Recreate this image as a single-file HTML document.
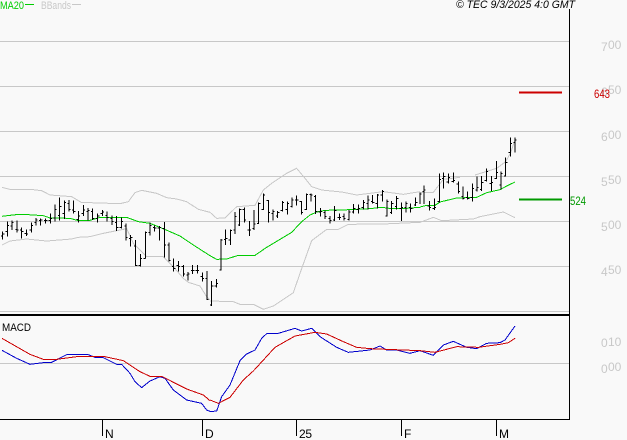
<!DOCTYPE html>
<html><head><meta charset="utf-8"><style>
html,body{margin:0;padding:0;background:#f9f9f9;width:627px;height:440px;overflow:hidden}
svg{display:block;position:absolute;left:0;top:0}
text{font-family:"Liberation Sans",sans-serif}
polyline{shape-rendering:crispEdges}
</style></head><body>
<svg width="627" height="440" viewBox="0 0 627 440" xmlns="http://www.w3.org/2000/svg">
<rect width="627" height="440" fill="#f9f9f9"/>
<g stroke="#c8c8c8" stroke-width="1" shape-rendering="crispEdges">
<path d="M0 41.5H569M0 86.5H569M0 131.5H569M0 176.5H569M0 221.5H569M0 266.5H569M0 311.5H569M0 363.5H569"/>
</g>
<path d="M0 315H570" stroke="#000" stroke-width="2" shape-rendering="crispEdges"/>
<path d="M569.5 9V419.5H0M102.5 419V436M202.5 419V436M296.5 419V436M401.5 419V436M496.5 419V436" stroke="#000" stroke-width="1" fill="none" shape-rendering="crispEdges"/>

<!-- left segment -->
<g transform="translate(0 150) scale(.33333)" fill="none" stroke-width="3">
<polyline stroke="#c8c8c8" points="6,112 30,118 100,119 125,122 150,135 215,140 245,158 270,158 360,161 385,155 405,128 425,121 470,130 500,143 530,147 560,155 595,178 630,187"/>
<polyline stroke="#c8c8c8" points="6,285 30,273 80,267 140,273 215,267 235,262 270,260 310,250 380,236 400,280 440,320 490,320 520,350 550,385 565,397 600,408 620,440 630,450"/>
<polyline stroke="#00cc00" points="6,199 30,196 57,193 85,194 130,197 150,204 210,205 235,212 270,211 300,202 380,202 415,215 450,220 480,232 540,258 580,285 630,317"/>
<path stroke="#000" shape-rendering="crispEdges" d="M8 245V268M3 258h5M8 252h5M22 214V260M17 245h5M22 226h5M36 211V240M31 228h5M36 218h5M51 212V248M46 238h5M51 240h5M65 232V266M60 240h5M65 244h5M79 238V258M74 250h5M79 252h5M94 217V248M89 240h5M94 226h5M108 204V226M103 218h5M108 210h5M122 205V226M117 212h5M122 210h5M137 205V220M132 212h5M137 212h5M151 190V220M146 212h5M151 206h5M165 163V215M160 204h5M165 178h5M179 142V212M174 196h5M179 170h5M193 152V207M188 190h5M193 158h5M207 150V185M202 160h5M207 178h5M221 152V190M216 180h5M221 184h5M235 183V218M230 208h5M235 198h5M250 165V198M245 190h5M250 180h5M264 174V212M259 185h5M264 182h5M278 176V210M273 184h5M278 205h5M293 190V217M288 205h5M293 198h5M307 180V198M302 190h5M307 186h5M321 184V215M316 196h5M321 202h5M336 197V225M331 206h5M336 215h5M350 198V243M345 218h5M350 232h5M364 203V235M359 232h5M364 215h5M378 220V272M373 228h5M378 262h5M392 255V290M387 265h5M392 262h5M407 270V348M402 288h5M407 346h5M421 312V350M416 346h5M421 325h5M436 244V325M431 325h5M436 248h5M450 217V257M445 248h5M450 226h5M464 226V245M459 232h5M464 234h5M478 228V272M473 234h5M478 232h5M493 216V323M488 235h5M493 285h5M507 278V335M502 285h5M507 332h5M521 325V365M516 350h5M521 355h5M535 333V365M530 346h5M535 350h5M550 345V380M545 350h5M550 372h5M564 366V392M559 375h5M564 372h5M578 345V372M573 362h5M578 362h5M592 345V370M587 362h5M592 362h5M607 367V395M602 380h5M607 385h5M621 363V450M616 385h5M621 448h5"/>
</g>

<!-- middle segment -->
<g transform="translate(210 150) scale(.33333)" fill="none" stroke-width="3">
<polyline stroke="#c8c8c8" points="0,187 20,205 45,204 80,170 135,166 160,120 185,100 230,70 260,55 285,85 305,110 335,120 395,126 440,135 520,125 580,133 630,125"/>
<polyline stroke="#c8c8c8" points="0,453 70,455 90,463 130,463 160,478 190,468 250,428 270,370 305,272 350,238 385,238 415,223 520,222 630,217"/>
<polyline stroke="#00cc00" points="0,317 20,328 50,327 85,316 135,316 170,292 205,271 245,247 275,215 300,195 320,186 345,181 395,180 480,176 515,172 545,176 575,176 630,172"/>
<path stroke="#000" shape-rendering="crispEdges" d="M5 393V468M0 465h5M5 408h5M19 387V413M14 408h5M19 400h5M33 267V362M28 360h5M33 270h5M47 238V285M42 268h5M47 265h5M61 238V285M56 270h5M61 242h5M75 186V252M70 240h5M75 200h5M89 175V228M84 225h5M89 178h5M103 173V218M98 178h5M103 210h5M118 213V258M113 240h5M118 240h5M132 180V240M127 236h5M132 222h5M146 158V222M141 220h5M146 160h5M160 130V180M155 178h5M160 135h5M175 150V218M170 152h5M175 188h5M189 178V212M184 190h5M189 185h5M203 183V204M198 198h5M203 188h5M217 153V185M212 182h5M217 158h5M232 154V194M227 178h5M232 160h5M246 143V173M241 170h5M246 150h5M260 136V167M255 150h5M260 150h5M274 153V194M269 155h5M274 188h5M289 130V180M284 178h5M289 133h5M303 130V155M298 134h5M303 135h5M317 135V192M312 140h5M317 185h5M331 174V200M326 186h5M331 185h5M345 182V207M340 188h5M345 200h5M360 198V221M355 205h5M360 212h5M374 168V213M369 210h5M374 182h5M388 190V210M383 202h5M388 202h5M402 190V212M397 200h5M402 205h5M417 180V212M412 208h5M417 186h5M431 162V190M426 186h5M431 176h5M445 163V190M440 178h5M445 175h5M460 150V178M455 172h5M460 158h5M474 137V178M469 160h5M474 150h5M488 135V160M483 155h5M488 158h5M502 132V175M497 160h5M502 135h5M517 120V155M512 135h5M517 125h5M531 148V200M526 198h5M531 155h5M545 153V192M540 188h5M545 160h5M560 138V178M555 170h5M560 145h5M574 158V213M569 175h5M574 172h5M588 154V188M583 172h5M588 160h5M602 160V188M597 172h5M602 176h5M617 142V168M612 165h5M617 158h5"/>
</g>

<!-- right segment -->
<g transform="translate(420 120) scale(.33333)" fill="none" stroke-width="3">
<polyline stroke="#c8c8c8" points="0,217 40,217 70,178 120,172"/>
<polyline stroke="#c8c8c8" points="165,165 230,145 257,125 272,98 285,60"/>
<polyline stroke="#c8c8c8" points="0,307 40,292 65,302 160,297 180,290 250,276 285,293"/>
<polyline stroke="#00cc00" points="0,261 20,256 45,256 60,246 110,234 170,232 200,218 240,209 262,197 285,186"/>
<path stroke="#000" shape-rendering="crispEdges" d="M0 218V252M0 222h5M12 197V252M7 215h5M12 210h5M28 243V272M23 258h5M28 262h5M43 236V270M38 265h5M43 262h5M58 160V248M53 245h5M58 178h5M71 158V205M66 175h5M71 170h5M85 160V190M80 186h5M85 172h5M100 158V187M95 184h5M100 182h5M115 185V220M110 192h5M115 215h5M129 200V238M124 230h5M129 235h5M143 215V238M138 232h5M143 235h5M157 190V245M152 232h5M157 205h5M171 170V215M166 210h5M171 202h5M185 168V213M180 208h5M185 188h5M199 145V185M194 182h5M199 155h5M214 168V213M209 190h5M214 188h5M229 123V177M224 175h5M229 158h5M243 155V208M238 195h5M243 160h5M257 112V170M252 168h5M257 128h5M271 52V110M266 98h5M271 70h5M285 52V98M280 68h5M285 60h5"/>
</g>

<!-- MACD -->
<g transform="translate(0 310) scale(.33333)" fill="none" stroke-width="3">
<polyline stroke="#0000cc" points="6,121 50,145 90,163 130,158 155,157 200,134 265,134 285,142 310,143 350,163 365,163 390,190 405,215 425,233 450,213 480,200 495,205 520,240 560,270 605,280 620,300 630,304"/>
<polyline stroke="#cc0000" points="6,85 90,133 130,148 170,148 230,140 310,139 370,152 420,185 450,199 485,199 560,237 610,255 630,272"/>
</g>
<g transform="translate(210 310) scale(.33333)" fill="none" stroke-width="3">
<polyline stroke="#0000cc" points="0,305 20,303 35,260 60,225 90,152 110,132 135,120 155,85 170,71 205,70 255,55 275,63 305,55 330,80 380,112 415,127 480,120 510,108 530,120 560,120 600,130 630,122"/>
<polyline stroke="#cc0000" points="0,270 25,280 60,262 100,210 130,183 195,112 255,78 315,67 350,72 400,95 440,112 480,116 630,122"/>
</g>
<g transform="translate(420 310) scale(.33333)" fill="none" stroke-width="3">
<polyline stroke="#0000cc" points="0,122 40,136 70,105 100,94 140,112 170,116 200,100 240,98 255,90 285,48"/>
<polyline stroke="#cc0000" points="0,122 45,127 110,110 175,112 240,103 265,98 285,85"/>
</g>

<!-- target lines -->
<path d="M519 92.5H562" stroke="#cc0000" stroke-width="2" shape-rendering="crispEdges"/>
<path d="M519 199.5H562" stroke="#009900" stroke-width="2" shape-rendering="crispEdges"/>
<path d="M25 4.5H34" stroke="#00cc00" stroke-width="1" shape-rendering="crispEdges"/>
<path d="M72 4.5H81" stroke="#c8c8c8" stroke-width="1" shape-rendering="crispEdges"/>

<!-- text -->
<g font-size="11">
<text x="0" y="9" fill="#00cc00" textLength="24" lengthAdjust="spacingAndGlyphs">MA20</text>
<text x="41" y="9" fill="#c8c8c8" textLength="30" lengthAdjust="spacingAndGlyphs">BBands</text>
<text x="2" y="331" fill="#000" textLength="29" lengthAdjust="spacingAndGlyphs">MACD</text>
</g>
<text x="456" y="8" font-size="11" font-style="italic" fill="#000" textLength="119" lengthAdjust="spacingAndGlyphs">© TEC 9/3/2025 4:0 GMT</text>
<g font-size="12" fill="#c8c8c8">
<text x="601" y="51">7<tspan y="49" x="608">00</tspan></text>
<text x="601" y="96">6<tspan y="94" x="608">50</tspan></text>
<text x="601" y="141">6<tspan y="139" x="608">00</tspan></text>
<text x="601" y="186">5<tspan y="184" x="608">50</tspan></text>
<text x="601" y="231">5<tspan y="229" x="608">00</tspan></text>
<text x="601" y="276">4<tspan y="274" x="608">50</tspan></text>
<text x="601" y="347">0<tspan y="346" x="608">10</tspan></text>
<text x="601" y="373">0<tspan y="371" x="608">00</tspan></text>
</g>
<text x="594" y="98" font-size="12" fill="#cc0000" textLength="16" lengthAdjust="spacingAndGlyphs">643</text>
<text x="570" y="205" font-size="12" fill="#009900" textLength="16" lengthAdjust="spacingAndGlyphs">524</text>
<g font-size="12" fill="#000">
<text x="105" y="438">N</text>
<text x="205" y="438">D</text>
<text x="299" y="438" textLength="13">25</text>
<text x="404" y="438">F</text>
<text x="499" y="438">M</text>
</g>
</svg>
</body></html>
